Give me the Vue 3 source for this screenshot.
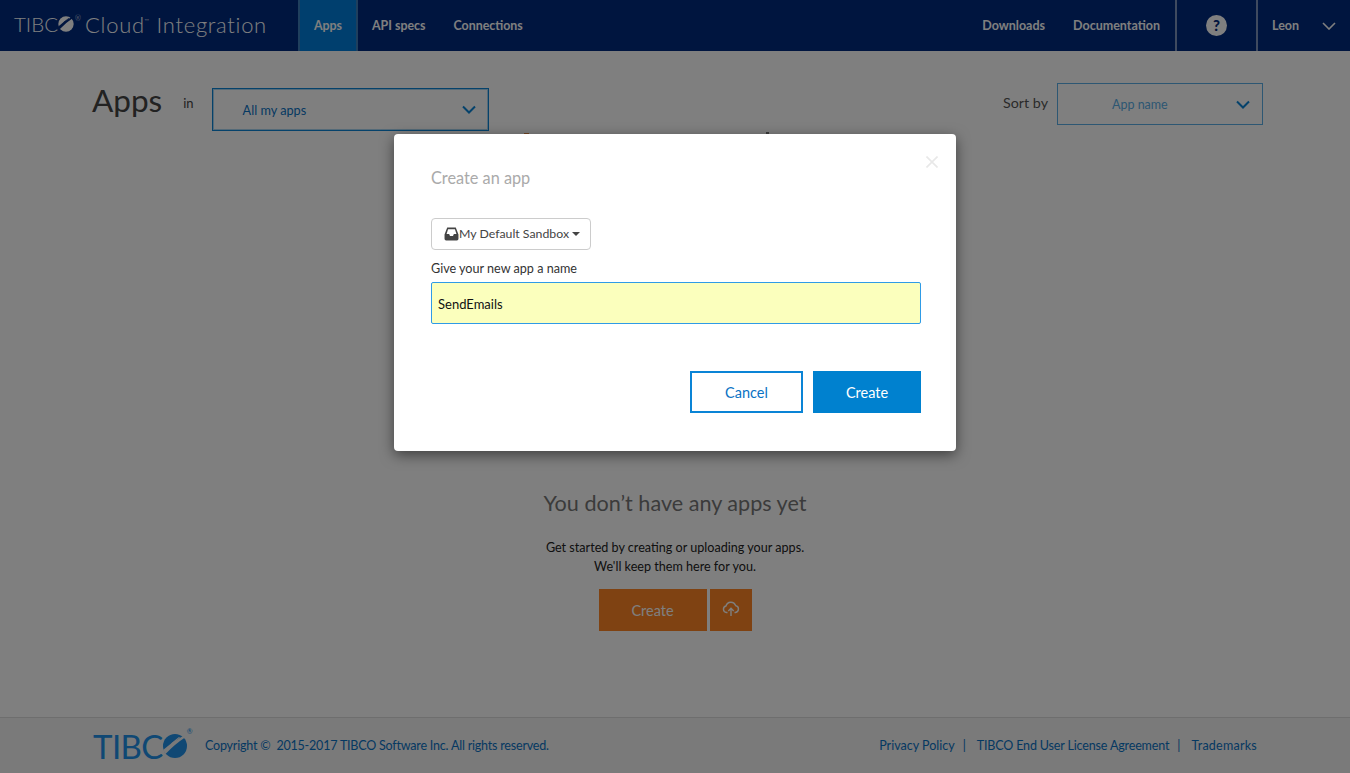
<template>
  <div class="page">
    <header class="topbar">
      <div class="brand">
        <span class="brand-tibco">TIBC</span>
        <svg class="brand-mark" viewBox="0 0 24 24" width="16" height="16">
          <circle cx="12" cy="12" r="11.5" fill="#fff" />
          <path d="M0 16 Q9 8 20 2 L22 3.5 Q12 10 2.5 20 Z" fill="#002a7e" />
          <path d="M8 9.5 Q12 6 16 3 L17 3.5 Q13 6.5 9.5 10 Z" fill="#002a7e" />
        </svg>
        <span class="brand-reg">®</span>
        <span class="brand-name">Cloud<span class="brand-tm">™</span> Integration</span>
      </div>
      <nav class="nav">
        <a v-for="item in navItems" :key="item" class="nav-item" :class="{ active: item === 'Apps' }">{{ item }}</a>
      </nav>
      <div class="nav-right">
        <a class="nav-link">Downloads</a>
        <a class="nav-link">Documentation</a>
        <div class="help-cell"><span class="help-icon">?</span></div>
        <div class="user-cell">
          <span>Leon</span>
          <svg width="14" height="8" viewBox="0 0 14 8"><path d="M1 1 L7 7 L13 1" fill="none" stroke="#fff" stroke-width="1.6" /></svg>
        </div>
      </div>
    </header>

    <main class="content">
      <div class="title-row">
        <h1 class="page-title">Apps</h1>
        <span class="in-label">in</span>
        <div class="select select-group">
          <span>All my apps</span>
          <svg width="14" height="9" viewBox="0 0 14 9"><path d="M1 1.5 L7 7.5 L13 1.5" fill="none" stroke="#0a84d6" stroke-width="2" /></svg>
        </div>
        <span class="sort-label">Sort by</span>
        <div class="select select-sort">
          <span>App name</span>
          <svg width="14" height="9" viewBox="0 0 14 9"><path d="M1 1.5 L7 7.5 L13 1.5" fill="none" stroke="#0a84d6" stroke-width="2" /></svg>
        </div>
      </div>

      <!-- tips of the illustration that sits behind the dialog -->
      <span class="tip tip-orange"></span>
      <span class="tip tip-dark"></span>

      <section class="empty">
        <h2 class="empty-title">You don’t have any apps yet</h2>
        <p class="empty-text">Get started by creating or uploading your apps.<br />We'll keep them here for you.</p>
        <div class="empty-actions">
          <button class="btn-orange btn-create">Create</button>
          <button class="btn-orange btn-upload">
            <svg width="18" height="16" viewBox="0 0 18 16" fill="none" stroke="#fff" stroke-width="1.4">
              <path d="M5.5 11.5 H4.5 A3.3 3.3 0 0 1 4 5 A5 5 0 0 1 13.6 4.6 A3.5 3.5 0 0 1 13.5 11.5 H12.5" />
              <path d="M9 15 V7.5 M6.3 10 L9 7.3 L11.7 10" />
            </svg>
          </button>
        </div>
      </section>
    </main>

    <footer class="footer">
      <div class="footer-logo">
        <span class="footer-tibco">TIBC</span>
        <svg viewBox="0 0 24 24" width="24" height="24">
          <circle cx="12" cy="12" r="12" fill="#2090e8" />
          <path d="M0 16 Q9 8 20 2 L22 3.5 Q12 10 2.5 20 Z" fill="#f4f4f4" />
          <path d="M8 9.5 Q12 6 16 3 L17 3.5 Q13 6.5 9.5 10 Z" fill="#f4f4f4" />
        </svg>
        <span class="footer-reg">®</span>
      </div>
      <span class="copyright">Copyright ©&nbsp; 2015-2017 TIBCO Software Inc. All rights reserved.</span>
      <div class="footer-links">
        <a>Privacy Policy</a><i>|</i>
        <a class="eula">TIBCO End User License Agreement</a><i>|</i>
        <a class="marks">Trademarks</a>
      </div>
    </footer>

    <div class="overlay">
      <div class="modal">
        <svg class="modal-close" width="12" height="12" viewBox="0 0 12 12">
          <path d="M0.5 0.5 L11.5 11.5 M11.5 0.5 L0.5 11.5" stroke="#e8e8e8" stroke-width="1.6" />
        </svg>
        <h3 class="modal-title">Create an app</h3>
        <button class="sandbox-btn">
          <svg class="sandbox-icon" width="15" height="14" viewBox="0 0 14 13">
            <path d="M3 0.5 H11 L13.5 7 V11 A1.5 1.5 0 0 1 12 12.5 H2 A1.5 1.5 0 0 1 0.5 11 V7 Z" fill="#444" />
            <path d="M3.8 2 H10.2 L11.6 6.6 H9.2 L8.4 8.3 H5.6 L4.8 6.6 H2.4 Z" fill="#fff" />
          </svg>
          <span class="sandbox-name">{{ sandbox }}</span>
          <span class="caret"></span>
        </button>
        <label class="field-label">Give your new app a name</label>
        <input class="name-input" :value="appName" />
        <div class="modal-actions">
          <button class="btn-cancel">Cancel</button>
          <button class="btn-primary">Create</button>
        </div>
      </div>
    </div>
  </div>
</template>

<script setup>
import { ref } from 'vue';

const navItems = ['Apps', 'API specs', 'Connections'];
const sandbox = ref('My Default Sandbox');
const appName = ref('SendEmails');
</script>

<style>
html, body { margin: 0; }
</style>

<style scoped>
.page {
  position: relative;
  display: flex;
  flex-direction: column;
  height: 773px;
  overflow: hidden;
  background: #fff;
  font-family: Lato, "Open Sans", sans-serif;
  font-size: 13.5px;
  color: #333;
}

/* top bar */
.topbar {
  display: flex;
  align-items: stretch;
  height: 51px;
  flex-shrink: 0;
  background: #002a7e;
  color: #fff;
}
.brand {
  display: flex;
  align-items: center;
  width: 298px;
  padding: 0 0 3px 14px;
  box-sizing: border-box;
  font-weight: 300;
}
.brand-tibco { font-size: 20.5px; }
.brand-mark { margin: 0 0 1px 0; }
.brand-reg { font-size: 7px; align-self: flex-start; margin: 14px 0 0 1px; width: 10px; }
.brand-name { font-size: 22px; letter-spacing: 0.7px; }
.brand-tm { font-size: 6px; vertical-align: 10px; line-height: 0; }
.nav { display: flex; }
.nav-item {
  display: flex;
  align-items: center;
  padding: 0 14px;
  font-weight: 700;
  font-size: 12.4px;
}
.nav-item.active {
  background: #007edc;
  border-left: 2px solid #3f7fbb;
  border-right: 2px solid #3f7fbb;
  width: 60px;
  box-sizing: border-box;
  justify-content: center;
}
.nav-right { display: flex; align-items: stretch; margin-left: auto; }
.nav-link {
  display: flex;
  align-items: center;
  margin-right: 28px;
  font-weight: 700;
  font-size: 12.5px;
}
.nav-link:nth-child(2) { margin-right: 15px; }
.help-cell {
  display: flex;
  align-items: center;
  justify-content: center;
  width: 79px;
  border-left: 2px solid #7f95be;
  border-right: 2px solid #7f95be;
}
.help-icon {
  width: 21px;
  height: 21px;
  border-radius: 50%;
  background: #fff;
  color: #002a7e;
  font-weight: 900;
  font-size: 15px;
  line-height: 21px;
  text-align: center;
}
.user-cell {
  display: flex;
  align-items: center;
  justify-content: space-between;
  width: 92px;
  padding: 0 14px;
  box-sizing: border-box;
  font-weight: 700;
  font-size: 12.5px;
}

/* main */
.content { flex: 1; position: relative; }
.title-row {
  display: flex;
  align-items: flex-start;
  padding: 0 87px 0 92px;
}
.page-title {
  margin: 29px 0 0;
  font-size: 31.5px;
  line-height: 40px;
  font-weight: 400;
  color: #444;
}
.in-label { margin: 44px 0 0 21px; font-size: 13px; color: #444; }
.select {
  display: flex;
  align-items: center;
  box-sizing: border-box;
  border: 1px solid #0a84d6;
  color: #0a84d6;
}
.select-group {
  width: 277px;
  height: 43px;
  margin: 37px 0 0 18px;
  padding: 0 12px 0 30px;
  justify-content: space-between;
  box-shadow: inset 0 0 0 1px rgba(10, 132, 214, 0.35);
  color: #0a72c4;
  font-size: 12.7px;
}
.sort-label { margin: 43px 9px 0 auto; font-size: 14.3px; color: #555; }
.select-sort {
  width: 206px;
  height: 42px;
  margin-top: 32px;
  padding: 0 12px 0 54px;
  justify-content: space-between;
  border-color: #5aaee6;
  color: #5aaee6;
  font-size: 12.5px;
}
.tip { position: absolute; top: 82px; width: 5px; height: 1px; }
.tip-orange { left: 524px; background: #e08a4a; }
.tip-dark { left: 766px; top: 81px; width: 3px; height: 2px; background: #777; }

.empty {
  margin-top: 358px;
  text-align: center;
}
.empty-title { margin: 0; font-size: 21.6px; line-height: 28px; font-weight: 400; color: #777; }
.empty-text { margin: 21px 0 0; font-size: 12.6px; line-height: 19px; color: #222; }
.empty-actions { display: flex; justify-content: center; gap: 3px; margin-top: 13px; }
.btn-orange {
  height: 42px;
  border: 0;
  background: #ff8524;
  color: #fff;
  font-family: inherit;
  font-size: 14.5px;
}
.btn-create { width: 108px; }
.btn-upload { width: 42px; padding: 0; }

/* footer */
.footer {
  display: flex;
  align-items: center;
  flex-shrink: 0;
  height: 56px;
  box-sizing: border-box;
  padding: 0 93px;
  background: #f4f4f4;
  border-top: 1px solid #ddd;
  color: #0a72c4;
  font-size: 12.5px;
}
.footer-logo { display: flex; align-items: center; width: 112px; color: #2090e8; }
.footer-tibco { font-size: 33px; font-weight: 400; letter-spacing: -0.6px; }
.footer-reg { font-size: 7px; align-self: flex-start; margin: 0; line-height: 10px; }
.copyright { letter-spacing: -0.2px; }
.footer-links { margin-left: auto; display: flex; align-items: center; }
.footer-links i { font-style: normal; margin: 0 11px 0 8px; }
.eula { letter-spacing: -0.15px; }
.marks { letter-spacing: 0.25px; }

/* modal */
.overlay {
  position: absolute;
  inset: 0;
  background: rgba(0, 0, 0, 0.5);
}
.modal {
  position: absolute;
  left: 394px;
  top: 134px;
  width: 562px;
  height: 317px;
  box-sizing: border-box;
  padding: 34px 35px 0 37px;
  background: #fff;
  border-radius: 4px;
  box-shadow: 0 4px 14px rgba(0, 0, 0, 0.5);
}
.modal-close { position: absolute; top: 22px; right: 18px; }
.modal-title {
  margin: 0;
  font-size: 16.3px;
  line-height: 20px;
  font-weight: 400;
  color: #aaa;
}
.sandbox-btn {
  display: flex;
  align-items: center;
  gap: 0;
  width: 160px;
  height: 32px;
  margin-top: 30px;
  padding: 0 12px 1px;
  background: #fff;
  border: 1px solid #ccc;
  border-radius: 4px;
  color: #444;
  font-family: inherit;
  font-size: 12.3px;
}
.sandbox-icon { flex-shrink: 0; }
.sandbox-name { white-space: nowrap; }
.caret {
  margin-left: 3px;
  border-left: 4px solid transparent;
  border-right: 4px solid transparent;
  border-top: 4px solid #444;
}
.field-label { display: block; margin-top: 10px; line-height: 18px; font-size: 12.6px; color: #333; }
.name-input {
  display: block;
  width: 490px;
  height: 42px;
  margin-top: 4px;
  padding: 1px 6px 0;
  box-sizing: border-box;
  background: #fbffbd;
  border: 1px solid #2f9be6;
  border-radius: 2px;
  outline: none;
  color: #111;
  font-family: inherit;
  font-size: 13px;
}
.modal-actions { display: flex; justify-content: flex-end; gap: 10px; margin-top: 47px; }
.btn-cancel, .btn-primary {
  height: 42px;
  box-sizing: border-box;
  font-family: inherit;
  font-size: 14.5px;
}
.btn-cancel { width: 113px; background: #fff; border: 2px solid #0a84d6; color: #0a72c4; }
.btn-primary { width: 108px; background: #0081cf; border: 0; color: #fff; }
</style>
